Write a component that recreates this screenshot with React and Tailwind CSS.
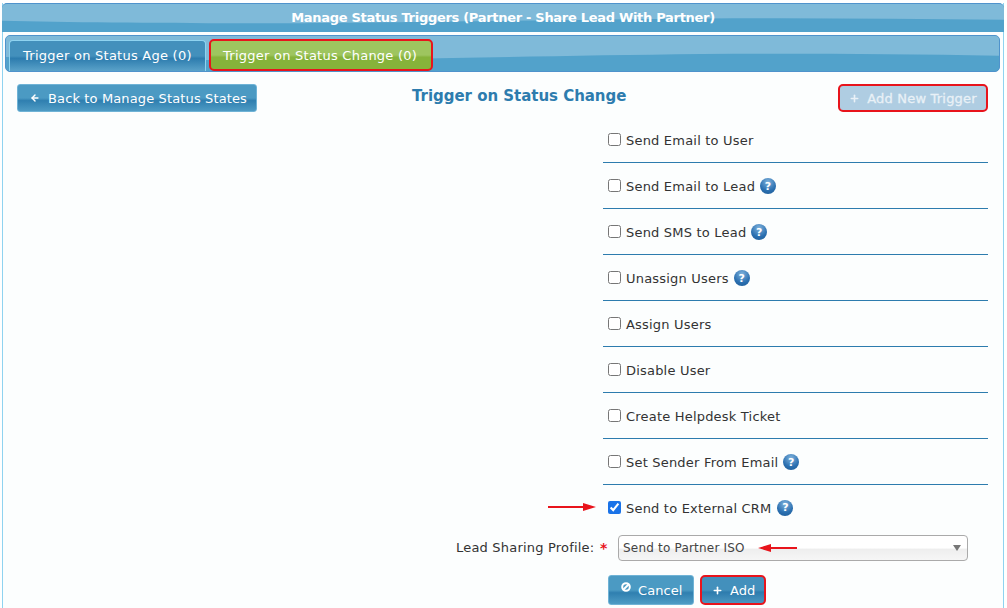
import React from 'react';
import { ArrowLeft, Plus } from 'lucide-react';

const triggers = [
  { label: 'Send Email to User' },
  { label: 'Send Email to Lead', help: true },
  { label: 'Send SMS to Lead', help: true },
  { label: 'Unassign Users', help: true },
  { label: 'Assign Users' },
  { label: 'Disable User' },
  { label: 'Create Helpdesk Ticket' },
  { label: 'Set Sender From Email', help: true },
];

function Gloss() {
  return (
    <svg className="absolute inset-0 w-full h-full" viewBox="0 0 1000 30" preserveAspectRatio="none">
      <path d="M0 0H1000V17C900 15.5 800 15 700 15.5C550 17 400 20 300 20.5C180 21 80 20 0 18Z" fill="#7fbad9" />
    </svg>
  );
}

function HelpIcon() {
  return (
    <span className="inline-flex items-center justify-center w-4 h-4 rounded-full bg-[radial-gradient(circle_at_50%_25%,#7fb2dc,#2a6fb0_60%,#1d5a94)] text-white text-[11px] font-bold leading-none">
      ?
    </span>
  );
}

function CancelIcon() {
  return (
    <svg className="mb-[7px]" width="10" height="10" viewBox="0 0 10 10" fill="none" stroke="white" strokeWidth="2">
      <circle cx="5" cy="5" r="3.8" />
      <path d="M2.5 7.5L7.5 2.5" />
    </svg>
  );
}

function Arrow({ className, left }) {
  return (
    <svg className={className} width="48" height="10" viewBox="0 0 48 10">
      {left ? (
        <path d="M0 5L13 1V4H39V6H13V9Z" fill="#e8141c" />
      ) : (
        <path d="M48 5L35 1V4H0V6H35V9Z" fill="#e8141c" />
      )}
    </svg>
  );
}

function BlueButton({ className = '', children }) {
  return (
    <div className={`flex items-center rounded-[3px] border border-[#6fb3d6] text-white bg-[linear-gradient(#4b9ac3_0%,#4b9ac3_50%,#2f7fb0_60%,#4e9bc4_100%)] ${className}`}>
      {children}
    </div>
  );
}

export default function App() {
  return (
    <div className="h-[608px] overflow-hidden bg-white pt-[3px] px-[2px] font-['DejaVu_Sans',Verdana,sans-serif] text-[13px] tracking-[0.2px] text-[#333]">
      <div className="w-[1002px] h-[605px] border-x border-[#8fd3f0] bg-[#fcfefe]">
        <div className="relative -mx-px h-[29px] rounded-t-[5px] border-t border-[#4f93cc] bg-[#52a2cb] overflow-hidden">
          <Gloss />
          <div className="relative text-center text-white font-bold text-[13px] leading-[28px] tracking-[-0.3px]">
            Manage Status Triggers (Partner - Share Lead With Partner)
          </div>
        </div>

        <div className="relative ml-[2px] w-[995px] mt-[3px] h-[37px] rounded-[5px] border border-[#4f93cc] bg-[#52a2cb] overflow-hidden">
          <Gloss />
          <div className="relative flex items-end gap-[3px] h-full pl-[3px]">
            <div className="w-[197px] h-[31px] pl-[13px] rounded-t-[4px] border border-b-0 border-[#8fd3f0] text-white leading-[30px] tracking-[0.25px] bg-[linear-gradient(#4390bc_0%,#4390bc_50%,#2d7cae_58%,#5aa2c9_100%)]">
              Trigger on Status Age (0)
            </div>
            <div className="w-[224px] h-[32px] pl-[12px] rounded-[5px] border-2 border-[#e8141c] text-white leading-[30px] tracking-[0.25px] bg-[linear-gradient(#9ec55f_0%,#9ec55f_50%,#86b33a_58%,#86b33a_100%)]">
              Trigger on Status Change (0)
            </div>
          </div>
        </div>

        <div className="relative flex items-start justify-between pl-[14px] pr-[15px] pt-[12px]">
          <BlueButton className="w-[240px] h-[28px] gap-[8px] pl-[12px] tracking-[0.13px]">
            <ArrowLeft size={10} strokeWidth={3.5} />
            <span className="pt-[2px]">Back to Manage Status States</span>
          </BlueButton>
          <div className="absolute left-0 top-[13px] ml-[409px] w-[230px] text-[15px] font-bold text-[#2d7cae] leading-[22px] tracking-[-0.03px]">
            Trigger on Status Change
          </div>
          <div className="w-[150px] h-[28px] flex items-center justify-center gap-[7px] rounded-[5px] border-2 border-[#e8141c] bg-[#afcde2] text-[#e9f1f7]">
            <Plus size={11} strokeWidth={3.5} />
            <span className="pt-[2px] [-webkit-text-stroke:0.3px_#e9f1f7]">Add New Trigger</span>
          </div>
        </div>

        <div className="ml-[600px] w-[385px] mt-[5px]">
          {triggers.map((t) => (
            <div key={t.label} className="h-[46px] flex items-center gap-[5px] pl-[5px] pb-[1px] border-b border-[#2d7cae]">
              <input type="checkbox" readOnly className="w-[13px] h-[13px] m-0 accent-[#1a73e8]" />
              <span className="pt-[4px]">{t.label}</span>
              {t.help && <span className="flex mt-[2px]"><HelpIcon /></span>}
            </div>
          ))}
          <div className="relative h-[46px] flex items-center gap-[5px] pl-[5px] pb-[1px]">
            <Arrow className="absolute left-[-55px] top-[17px]" />
            <input type="checkbox" checked readOnly className="w-[13px] h-[13px] m-0 accent-[#1a73e8]" />
            <span className="mr-[1px] pt-[2px]">Send to External CRM</span>
            <span className="flex"><HelpIcon /></span>
          </div>
        </div>

        <div className="flex items-center ml-[453px] mt-[4px] h-[26px]">
          <span className="w-[144px]">Lead Sharing Profile:</span>
          <span className="w-[18px] text-[14px] text-[#e8141c] font-bold">*</span>
          <div className="relative w-[350px] h-[26px] flex items-center justify-between pl-[4px] pr-[6px] rounded-[4px] border border-[#aaa] bg-[linear-gradient(#fff_0%,#fff_50%,#eee_55%,#f6f6f6_100%)] text-[12px] text-[#444]">
            <span>Send to Partner ISO</span>
            <svg width="8" height="6" viewBox="0 0 8 6"><path d="M0 0H8L4 6Z" fill="#777" /></svg>
            <Arrow left className="absolute left-[139px] top-[7px]" />
          </div>
        </div>

        <div className="flex ml-[605px] mt-[14px] gap-[6px]">
          <BlueButton className="w-[86px] h-[30px] gap-[7px] pl-[12px] tracking-[0.05px]">
            <CancelIcon />
            <span className="pt-[2px]">Cancel</span>
          </BlueButton>
          <div className="w-[66px] h-[30px] flex items-center gap-[7px] pl-[10px] tracking-[0px] rounded-[5px] border-2 border-[#e8141c] text-white bg-[linear-gradient(#4390bc_0%,#4390bc_50%,#2d7cae_58%,#4b96c0_100%)]">
            <Plus size={11} strokeWidth={3.5} />
            <span className="pt-[2px]">Add</span>
          </div>
        </div>
      </div>
    </div>
  );
}
